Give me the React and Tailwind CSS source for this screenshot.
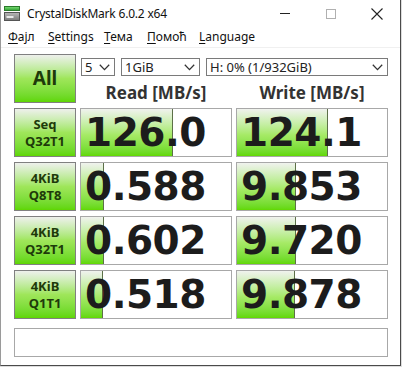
import React from "react";

const rows = [
  { l1: "Seq", l2: "Q32T1", r: "126.0", w: "124.1", rb: 93, wb: 92 },
  { l1: "4KiB", l2: "Q8T8", r: "0.588", w: "9.853", rb: 23, wb: 60 },
  { l1: "4KiB", l2: "Q32T1", r: "0.602", w: "9.720", rb: 23, wb: 60 },
  { l1: "4KiB", l2: "Q1T1", r: "0.518", w: "9.878", rb: 22, wb: 59 },
];

const BOX_W = 152;

function Chevron() {
  return (
    <svg width="11" height="7" viewBox="0 0 11 7" className="shrink-0">
      <polyline points="0.8,0.8 5.5,5.6 10.2,0.8" fill="none" stroke="#333" strokeWidth="1.3" />
    </svg>
  );
}

function Select({ w, text }) {
  return (
    <div
      className="h-[18px] border border-[#7a7a7a] bg-white flex items-center justify-between pl-[3px] pr-[4px] text-[13px] text-[#222] leading-none"
      style={{ width: w }}
    >
      <span>{text}</span>
      <Chevron />
    </div>
  );
}

function ValueBox({ value, bar }) {
  return (
    <div className="relative w-[152px] h-[49px] border border-[#a8a8a8] bg-white overflow-hidden">
      <div
        className="absolute left-0 top-0 bottom-0 bg-linear-to-b from-[#f0f2ee] via-[#a6ea66] via-55% to-[#62d800] border-r border-r-[#5c7048]"
        style={{ width: (bar / BOX_W) * 100 + "%" }}
      />
      <div
        className="relative h-full flex items-center pl-[4px] text-[39px] font-bold text-[#1c1c1c] leading-none tracking-[-0.5px]"
        style={{ fontFamily: '"DejaVu Sans", Verdana, sans-serif' }}
      >
        {value}
      </div>
    </div>
  );
}

function LabelButton({ children, big }) {
  return (
    <div
      className={
        "w-[62px] h-[49px] border border-[#808080] bg-linear-to-b from-[#eef0ec] via-[#9fe65a] via-50% to-[#5fd600] flex flex-col items-center justify-center font-bold text-[#1e3a0a] " +
        (big ? "text-[19px] leading-none" : "text-[13px] leading-[17px]")
      }
      style={{ fontFamily: '"Noto Sans", sans-serif' }}
    >
      {children}
    </div>
  );
}

function DriveIcon() {
  return (
    <svg width="16" height="15" viewBox="0 0 16 15">
      <defs>
        <linearGradient id="g1" x1="0" y1="0" x2="0" y2="1">
          <stop offset="0" stopColor="#7de07a" />
          <stop offset="1" stopColor="#2f9e2f" />
        </linearGradient>
        <linearGradient id="g2" x1="0" y1="0" x2="0" y2="1">
          <stop offset="0" stopColor="#b8b8b8" />
          <stop offset="1" stopColor="#7a7a7a" />
        </linearGradient>
      </defs>
      <rect x="0.5" y="0.5" width="15" height="4" fill="url(#g1)" stroke="#2a7a2a" />
      <rect x="0.5" y="6.5" width="15" height="8" fill="url(#g2)" stroke="#555" />
      <rect x="2.5" y="10" width="7" height="2" fill="#e8e8e8" />
    </svg>
  );
}

function Menu({ first, rest }) {
  return (
    <span>
      <span className="underline underline-offset-[2px] decoration-1">{first}</span>
      {rest}
    </span>
  );
}

export default function App() {
  return (
    <div className="w-[402px] h-[367px] bg-[#dcdcdc] overflow-hidden" style={{ fontFamily: '"Noto Sans", sans-serif' }}>
      <div className="w-[401px] h-[366px] bg-white border-l border-l-[#9a9a9a] border-r border-r-[#4a4a4a] border-b border-b-[#4a4a4a] flex flex-col">
        {/* Title bar */}
        <div className="h-[27px] flex items-center shrink-0">
          <div className="ml-[3px] mt-[-1px]">
            <DriveIcon />
          </div>
          <div className="ml-[7px] text-[12px] text-[#111] tracking-[-0.2px]">CrystalDiskMark 6.0.2 x64</div>
          <div className="ml-auto flex items-center h-full">
            <div className="w-[46px] h-full flex items-center justify-center">
              <div className="w-[10px] h-px bg-[#222]" />
            </div>
            <div className="w-[46px] h-full flex items-center justify-center">
              <div className="w-[10px] h-[10px] border border-[#b0b0b0]" />
            </div>
            <div className="w-[46px] h-full flex items-center justify-center">
              <svg width="12" height="12" viewBox="0 0 12 12">
                <path d="M0.5 0.5 L11.5 11.5 M11.5 0.5 L0.5 11.5" stroke="#222" strokeWidth="1.1" />
              </svg>
            </div>
          </div>
        </div>
        {/* Menu */}
        <div className="h-[20px] flex items-center text-[12px] text-[#111] pl-[7px] shrink-0">
          <div className="flex gap-[10px]">
            <span className="w-[30px]"><Menu first="Ф" rest="ајл" /></span>
            <span className="w-[46px]"><Menu first="S" rest="ettings" /></span>
            <span className="w-[33px]"><Menu first="Т" rest="ема" /></span>
            <span className="w-[42px]"><Menu first="П" rest="омоћ" /></span>
            <span><Menu first="L" rest="anguage" /></span>
          </div>
        </div>
        <div className="h-px bg-[#f0f0f0] shrink-0" />
        {/* Body */}
        <div className="pl-[13px] pt-[6px] flex flex-col">
          <div className="flex gap-[4px]">
            <LabelButton big>All</LabelButton>
            <div className="flex flex-col w-[308px]">
              <div className="flex gap-[6px] mt-[4px] ml-[1px]">
                <Select w={34} text="5" />
                <Select w={79} text="1GiB" />
                <Select w={182} text="H: 0% (1/932GiB)" />
              </div>
              <div className="flex mt-[8px] text-[17px] font-bold text-[#333] leading-none">
                <div className="w-[152px] text-center">Read [MB/s]</div>
                <div className="w-[4px]" />
                <div className="w-[152px] text-center">Write [MB/s]</div>
              </div>
            </div>
          </div>
          {rows.map((r, i) => (
            <div key={i} className="flex gap-[4px] mt-[5px]">
              <LabelButton>
                <span>{r.l1}</span>
                <span>{r.l2}</span>
              </LabelButton>
              <ValueBox value={r.r} bar={r.rb} />
              <ValueBox value={r.w} bar={r.wb} />
            </div>
          ))}
          <div className="mt-[9px] w-[374px] h-[29px] border border-[#a8a8a8] bg-white" />
        </div>
      </div>
    </div>
  );
}
